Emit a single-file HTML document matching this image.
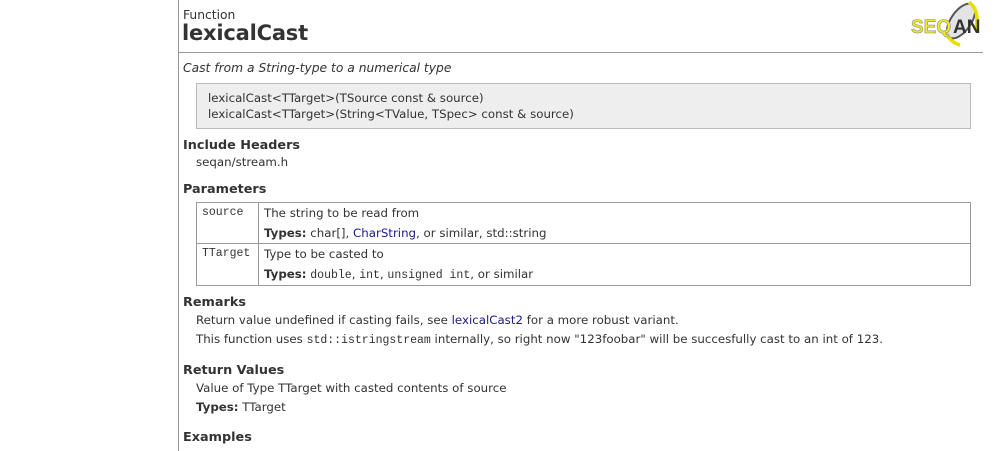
<!DOCTYPE html>
<html><head><meta charset="utf-8"><style>
body{margin:0;width:1008px;height:451px;overflow:hidden;background:#fff;font-family:"DejaVu Sans",sans-serif;color:#333;position:relative;font-size:11.8px}
.a{position:absolute;white-space:nowrap}
.vl{position:absolute;left:178px;top:0;width:1px;height:451px;background:#999}
.hl{position:absolute;left:178px;top:52px;width:805px;height:1px;background:#999}
h{font-weight:bold;font-size:12.8px}
.mono{font-family:"Liberation Mono",monospace;font-size:11.5px}
a{color:#1a1a8c;text-decoration:none}
.box{position:absolute;left:196px;top:83px;width:773px;height:44px;background:#eee;border:1px solid #bbb}
table{position:absolute;left:196px;top:202px;width:775px;border-collapse:collapse}
td{border:1px solid #999;vertical-align:top;padding:1px 5px 0 5px;font-size:11.8px;line-height:19.5px;height:40px;box-sizing:border-box}
td.k{width:62px;font-family:"Liberation Mono",monospace;font-size:11.5px;line-height:18px}
</style></head><body>
<div class="vl"></div><div class="hl"></div>
<div class="a" style="left:183px;top:8px;font-size:12.3px">Function</div>
<div class="a" style="left:182px;top:21px;font-size:21px;font-weight:bold;letter-spacing:-0.2px">lexicalCast</div>
<div class="a" style="left:183px;top:61px;font-style:italic;font-size:12.3px">Cast from a String-type to a numerical type</div>
<div class="box"></div>
<div class="a" style="left:208px;top:90px;line-height:16px">lexicalCast&lt;TTarget&gt;(TSource const &amp; source)<br>lexicalCast&lt;TTarget&gt;(String&lt;TValue, TSpec&gt; const &amp; source)</div>
<div class="a" style="left:183px;top:138px"><h>Include Headers</h></div>
<div class="a" style="left:196px;top:155px">seqan/stream.h</div>
<div class="a" style="left:183px;top:182px"><h>Parameters</h></div>
<table>
<tr><td class="k">source</td><td>The string to be read from<br><b>Types:</b> char[], <a>CharString</a>, or similar, std::string</td></tr>
<tr><td class="k">TTarget</td><td>Type to be casted to<br><b>Types:</b> <span class="mono">double</span>, <span class="mono">int</span>, <span class="mono">unsigned int</span>, or similar</td></tr>
</table>
<div class="a" style="left:183px;top:295px"><h>Remarks</h></div>
<div class="a" style="left:196px;top:313px">Return value undefined if casting fails, see <a>lexicalCast2</a> for a more robust variant.</div>
<div class="a" style="left:196px;top:332px">This function uses <span class="mono">std::istringstream</span> internally, so right now "123foobar" will be succesfully cast to an int of 123.</div>
<div class="a" style="left:183px;top:363px"><h>Return Values</h></div>
<div class="a" style="left:196px;top:381px">Value of Type TTarget with casted contents of source</div>
<div class="a" style="left:196px;top:400px"><b>Types:</b> TTarget</div>
<div class="a" style="left:183px;top:430px"><h>Examples</h></div>
<svg class="a" style="left:905px;top:0" width="80" height="48">
<ellipse cx="56" cy="21" rx="10" ry="20" fill="#e4e4e4" stroke="#555" stroke-width="2" transform="rotate(35 56 21)"/>
<path d="M64 2 Q76 12 70 30" stroke="#e8e000" stroke-width="3.5" fill="none"/>
<path d="M40 30 Q44 42 55 45" stroke="#e8e000" stroke-width="3.5" fill="none"/>
<text x="6" y="33" font-family="Liberation Sans" font-weight="bold" font-size="19" fill="#f0ea20" stroke="#888" stroke-width="0.6">SEQ</text>
<text x="48" y="33" font-family="Liberation Sans" font-weight="bold" font-size="19" fill="#333">AN</text>
</svg>
</body></html>
